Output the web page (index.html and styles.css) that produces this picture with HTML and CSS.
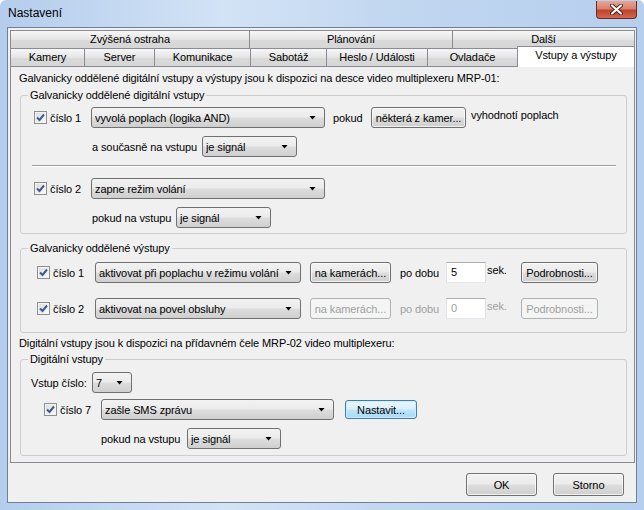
FILE: index.html
```html
<!DOCTYPE html>
<html lang="cs">
<head>
    <meta charset="UTF-8">
    <meta name="viewport" content="width=device-width, initial-scale=1.0">
    <title>Nastavení</title>
    <link rel="stylesheet" href="styles.css">
</head>
<body>
    <div class="window">
        <div class="titlebar">
            <span class="title">Nastavení</span>
            <span class="close-btn">
                <svg width="13" height="11" viewBox="0 0 13 11">
                    <path d="M2 1.5 L11 9.5 M11 1.5 L2 9.5" stroke="#4b1d17" stroke-width="4" stroke-linecap="round"/>
                    <path d="M2 1.5 L11 9.5 M11 1.5 L2 9.5" stroke="#ffffff" stroke-width="2.2" stroke-linecap="round"/>
                </svg>
            </span>
        </div>

        <div class="client">
            <!-- tab strip, two rows -->
            <div class="tabs">
                <div class="tab-row back-row">
                    <div class="tab">Zvýšená ostraha</div>
                    <div class="tab">Plánování</div>
                    <div class="tab">Další</div>
                </div>
                <div class="tab-row front-row">
                    <div class="tab">Kamery</div>
                    <div class="tab">Server</div>
                    <div class="tab">Komunikace</div>
                    <div class="tab">Sabotáž</div>
                    <div class="tab">Heslo / Události</div>
                    <div class="tab">Ovladače</div>
                    <div class="tab active">Vstupy a výstupy</div>
                </div>
            </div>

            <div class="panel">
                <p class="note">Galvanicky oddělené digitální vstupy a výstupy jsou k dispozici na desce video multiplexeru MRP-01:</p>

                <fieldset class="group group-inputs">
                    <legend>Galvanicky oddělené digitální vstupy</legend>

                    <div class="row in-row first">
                        <label class="check-cell"><span class="checkbox checked"></span>číslo 1</label>
                        <div class="combo action-combo"><span class="value">vyvolá poplach (logika AND)</span></div>
                        <span class="word-pokud">pokud</span>
                        <div class="button cams-btn">některá z kamer...</div>
                        <span class="raised-text trail-text">vyhodnotí poplach</span>
                    </div>
                    <div class="row sub-row">
                        <span class="cond-label wide">a současně na vstupu</span>
                        <div class="combo signal-combo"><span class="value">je signál</span></div>
                    </div>

                    <div class="separator"></div>

                    <div class="row in-row">
                        <label class="check-cell"><span class="checkbox checked"></span>číslo 2</label>
                        <div class="combo action-combo"><span class="value">zapne režim volání</span></div>
                    </div>
                    <div class="row sub-row last">
                        <span class="cond-label">pokud na vstupu</span>
                        <div class="combo signal-combo"><span class="value">je signál</span></div>
                    </div>
                </fieldset>

                <fieldset class="group group-outputs">
                    <legend>Galvanicky oddělené výstupy</legend>

                    <div class="row out-row">
                        <label class="check-cell"><span class="checkbox checked"></span>číslo 1</label>
                        <div class="combo out-combo"><span class="value">aktivovat při poplachu v režimu volání</span></div>
                        <div class="button cam-btn">na kamerách...</div>
                        <span class="dur-label">po dobu</span>
                        <div class="textbox">5</div>
                        <span class="raised-text sec-label">sek.</span>
                        <div class="button detail-btn">Podrobnosti...</div>
                    </div>
                    <div class="row out-row">
                        <label class="check-cell"><span class="checkbox checked"></span>číslo 2</label>
                        <div class="combo out-combo"><span class="value">aktivovat na povel obsluhy</span></div>
                        <div class="button cam-btn disabled">na kamerách...</div>
                        <span class="dur-label disabled-text">po dobu</span>
                        <div class="textbox disabled-text">0</div>
                        <span class="raised-text sec-label disabled-text">sek.</span>
                        <div class="button detail-btn disabled">Podrobnosti...</div>
                    </div>
                </fieldset>

                <p class="note note-second">Digitální vstupy jsou k dispozici na přídavném čele MRP-02 video multiplexeru:</p>

                <fieldset class="group group-digital">
                    <legend>Digitální vstupy</legend>

                    <div class="row pick-row">
                        <span class="pick-label">Vstup číslo:</span>
                        <div class="combo num-combo"><span class="value">7</span></div>
                    </div>
                    <div class="row dig-row">
                        <label class="check-cell"><span class="checkbox checked"></span>číslo 7</label>
                        <div class="combo action-combo"><span class="value">zašle SMS zprávu</span></div>
                        <div class="button focused set-btn">Nastavit...</div>
                    </div>
                    <div class="row sub-row dig-sub">
                        <span class="cond-label">pokud na vstupu</span>
                        <div class="combo signal-combo"><span class="value">je signál</span></div>
                    </div>
                </fieldset>
            </div>

            <div class="footer">
                <div class="button dlg-btn">OK</div>
                <div class="button dlg-btn">Storno</div>
            </div>
        </div>
    </div>
</body>
</html>
```

FILE: styles.css
```css
* {
    box-sizing: border-box;
}
body {
    margin: 0;
    font-family: "Liberation Sans", Arial, sans-serif;
    font-size: 11px;
    letter-spacing: -0.1px;
    color: #000;
    background: #fff;
}
.window {
    width: 644px;
    height: 510px;
    display: flex;
    flex-direction: column;
    background: linear-gradient(to right, #b4cdec 0%, #d3e3f6 35%, #c2d7f0 60%, #b6cfee 100%);
    border-radius: 6px 6px 0 0;
}
.titlebar {
    height: 27px;
    display: flex;
    align-items: flex-start;
    padding-left: 8px;
}
.title {
    font-size: 12px;
    letter-spacing: 0;
    line-height: 14px;
    padding-top: 6px;
}
.close-btn {
    margin-left: auto;
    margin-right: 7px;
    margin-top: 1px;
    width: 41px;
    height: 18px;
    border: 1px solid #6d2a22;
    border-top: none;
    border-radius: 0 0 4px 4px;
    background: linear-gradient(#e8a594 0%, #d9826f 45%, #c1432f 55%, #d06a4e 100%);
    display: flex;
    align-items: center;
    justify-content: center;
}
.client {
    flex: 1;
    margin: 0 7px 7px 7px;
    border: 1px solid #6e8197;
    background: #f0f0f0;
    display: flex;
    flex-direction: column;
    padding: 2px 1px 0 2px;
}

/* tabs */
.tabs {
    display: flex;
    flex-direction: column;
}
.tab-row {
    display: flex;
    height: 18px;
}
.tab {
    height: 18px;
    border: 1px solid #898c95;
    border-right: none;
    border-bottom: none;
    background: linear-gradient(#f7f7f7, #e4e4e4 50%, #dadada 51%, #d6d6d6);
    text-align: center;
    line-height: 16px;
    white-space: nowrap;
}
.tab:last-child {
    border-right: 1px solid #898c95;
}
.back-row .tab:nth-child(1) { width: 239px; }
.back-row .tab:nth-child(2) { width: 203px; }
.back-row .tab:nth-child(3) { width: 183px; }
.front-row .tab:nth-child(1) { width: 74px; }
.front-row .tab:nth-child(2) { width: 70px; }
.front-row .tab:nth-child(3) { width: 96px; }
.front-row .tab:nth-child(4) { width: 76px; }
.front-row .tab:nth-child(5) { width: 101px; }
.front-row .tab:nth-child(6) { width: 90px; }
.front-row .tab:nth-child(7) { width: 118px; }
.tab.active {
    position: relative;
    z-index: 1;
    height: 21px;
    margin-top: -2px;
    background: #fff;
    line-height: 16px;
}

/* page */
.panel {
    border: 1px solid #898c95;
    background: #f0f0f0;
    padding: 5px 7px 6px 8px;
}
.note {
    margin: 0;
    line-height: 13px;
    white-space: nowrap;
}
.note-second {
    margin-top: 4px;
}
.group {
    margin: 3px 0 0 1px;
    padding: 0;
    border: 1px solid #cdcdcd;
    border-radius: 3px;
    min-inline-size: auto;
}
.group legend {
    margin-left: 7px;
    padding: 0 2px;
    line-height: 14px;
}
.group-outputs {
    margin-top: 7px;
}
.group-digital {
    margin-top: 2px;
}
.row {
    display: flex;
    align-items: center;
    height: 21px;
    white-space: nowrap;
}
.check-cell {
    display: flex;
    align-items: center;
    gap: 3px;
}
.checkbox {
    width: 13px;
    height: 13px;
    border: 1px solid #8e8f8f;
    background: linear-gradient(135deg, #dcdcdc, #fbfbfb);
    box-shadow: inset 0 0 0 1px #f4f4f4;
}
.checkbox.checked {
    background-image: url("data:image/svg+xml;utf8,<svg xmlns='http://www.w3.org/2000/svg' width='11' height='11'><path d='M2 5.5 L4.5 8 L9 2.5' fill='none' stroke='%233d5a91' stroke-width='2'/></svg>"), linear-gradient(135deg, #dcdcdc, #fbfbfb);
}

/* controls */
.combo {
    display: flex;
    align-items: center;
    height: 21px;
    border: 1px solid #707070;
    border-radius: 3px;
    background: linear-gradient(#f2f2f2 0%, #ebebeb 48%, #dddddd 52%, #cfcfcf 100%);
    padding: 0 8px 0 3px;
}
.combo .value {
    flex: 1;
    overflow: hidden;
}
.combo::after {
    content: "";
    width: 7px;
    height: 4px;
    background: #000;
    clip-path: polygon(0 0, 100% 0, 50% 100%);
}
.button {
    height: 21px;
    border: 1px solid #707070;
    border-radius: 3px;
    background: linear-gradient(#f2f2f2 0%, #ebebeb 48%, #dddddd 52%, #cfcfcf 100%);
    display: flex;
    align-items: center;
    justify-content: center;
    box-shadow: inset 0 0 0 1px rgba(255, 255, 255, 0.7);
}
.button.disabled {
    border-color: #adb2b5;
    background: #f4f4f4;
    box-shadow: none;
    color: #a0a0a0;
}
.button.focused {
    border-color: #3c7fb1;
    background: linear-gradient(#eaf6fd 0%, #d9f0fc 48%, #bee6fd 52%, #a7d9f5 100%);
    box-shadow: inset 0 0 0 1px #d0ecfc;
}
.textbox {
    width: 40px;
    height: 21px;
    background: #fff;
    border: 1px solid #abadb3;
    border-left-color: #e2e3ea;
    border-right-color: #dbdfe6;
    border-bottom-color: #e3e9ef;
    padding: 3px 0 0 4px;
    line-height: 13px;
}
.disabled-text {
    color: #a0a0a0;
}
.raised-text {
    align-self: flex-start;
    line-height: 13px;
    padding-top: 2px;
}

/* first group */
.in-row {
    margin-top: 11px;
    padding-left: 13px;
}
.in-row.first {
    margin-top: 5px;
}
.in-row .check-cell {
    width: 57px;
}
.action-combo {
    width: 234px;
}
.word-pokud {
    margin-left: 8px;
    width: 38px;
}
.cams-btn {
    width: 95px;
}
.trail-text {
    margin-left: 5px;
}
.sub-row {
    margin-top: 8px;
    padding-left: 71px;
}
.sub-row.last {
    margin-bottom: 5px;
}
.cond-label {
    width: 84px;
}
.cond-label.wide {
    width: 110px;
}
.signal-combo {
    width: 95px;
}
.separator {
    margin: 8px 10px 0 11px;
    height: 1px;
    background: #a0a0a0;
    border-bottom: 1px solid #fff;
    box-sizing: content-box;
}

/* outputs group */
.out-row {
    margin-top: 15px;
    padding-left: 16px;
}
.out-row:first-of-type {
    margin-top: 7px;
}
.out-row:last-child {
    margin-bottom: 13px;
}
.out-row .check-cell {
    width: 58px;
}
.out-combo {
    width: 206px;
}
.cam-btn {
    margin-left: 9px;
    width: 81px;
}
.dur-label {
    margin-left: 9px;
    width: 46px;
}
.sec-label {
    margin-left: 1px;
    width: 34px;
}
.detail-btn {
    width: 77px;
}

/* digital inputs group */
.pick-row {
    margin-top: 6px;
    padding-left: 10px;
}
.pick-label {
    width: 61px;
}
.num-combo {
    width: 40px;
}
.dig-row {
    margin-top: 6px;
    padding-left: 23px;
}
.dig-row .check-cell {
    width: 57px;
}
.dig-row .action-combo {
    width: 233px;
}
.set-btn {
    margin-left: 11px;
    width: 72px;
    height: 19px;
}
.dig-sub {
    padding-left: 80px;
    margin-bottom: 6px;
}
.dig-sub .cond-label {
    width: 86px;
}
.dig-sub .signal-combo {
    width: 94px;
}

/* dialog buttons */
.footer {
    flex: 1;
    display: flex;
    justify-content: flex-end;
    align-items: flex-start;
    gap: 16px;
    padding: 10px 11px 0 0;
}
.dlg-btn {
    width: 71px;
    height: 23px;
}
```
